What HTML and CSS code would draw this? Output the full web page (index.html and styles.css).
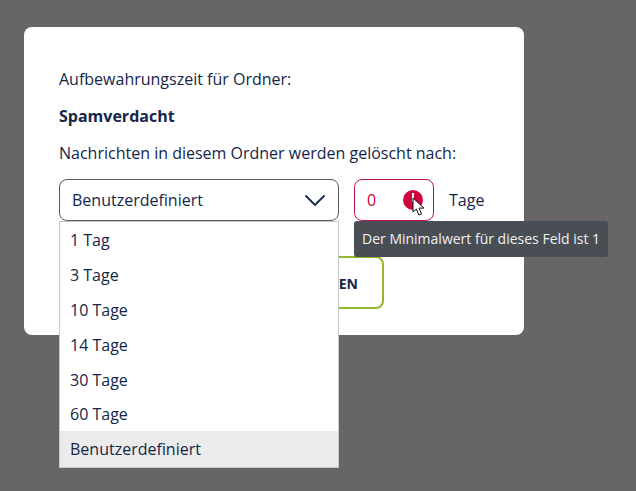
FILE: index.html
```html
<!DOCTYPE html>
<html lang="de">
<head>
<meta charset="utf-8">
<title>Aufbewahrungszeit</title>
<link rel="stylesheet" href="styles.css">
</head>
<body>
<div class="dialog">
  <p class="line first">Aufbewahrungszeit für Ordner:</p>
  <p class="line name">Spamverdacht</p>
  <p class="line">Nachrichten in diesem Ordner werden gelöscht nach:</p>
  <div class="controls">
    <div class="select-wrap">
      <div class="select">
        <span>Benutzerdefiniert</span>
        <svg class="chev" width="22" height="13" viewBox="0 0 22 13"><path d="M1.5 1.5 11 11l9.5-9.5" fill="none" stroke="#14264a" stroke-width="1.8"/></svg>
      </div>
      <ul class="menu">
        <li>1 Tag</li>
        <li>3 Tage</li>
        <li>10 Tage</li>
        <li>14 Tage</li>
        <li>30 Tage</li>
        <li>60 Tage</li>
        <li class="active">Benutzerdefiniert</li>
      </ul>
    </div>
    <div class="input-wrap">
      <div class="num">
        <span>0</span>
        <span class="err"><i class="bar"></i></span>
      </div>
      <div class="tip">Der Minimalwert für dieses Feld ist 1</div>
      <svg class="cursor" width="15" height="20" viewBox="0 0 15 20"><path d="M1 1v14l3.4-3 2.4 6 2.7-1.1-2.5-5.8H12z" fill="#fff" stroke="#111" stroke-width="1"/></svg>
    </div>
    <span class="unit">Tage</span>
  </div>
  <div class="actions">
    <button class="btn">ABBRECHEN</button>
  </div>
</div>
</body>
</html>
```
FILE: styles.css
```css
* { box-sizing: border-box; }
html, body { margin: 0; height: 100%; }
body {
  background: #666;
  font-family: "Open Sans", sans-serif;
  color: #14264a;
  font-size: 16px;
  padding: 27px 0 0 24px;
  overflow: hidden;
}
.dialog {
  width: 500px;
  height: 308px;
  background: #fff;
  border-radius: 8px;
  padding: 40px 35px 0;
}
.line { margin: 0 0 13px; line-height: 24px; height: 24px; }
.name { font-weight: 700; }
.controls { display: flex; align-items: flex-start; margin-top: 14px; }
.select-wrap { position: relative; width: 280px; }
.select {
  height: 42px;
  border: 1px solid #555b66;
  border-radius: 8px;
  display: flex;
  align-items: center;
  justify-content: space-between;
  padding: 0 3px 0 12px;
}
.chev { margin-right: 9px; }
.menu {
  position: absolute;
  left: 0;
  top: 42px;
  z-index: 2;
  width: 280px;
  margin: 0;
  padding: 0;
  list-style: none;
  background: #fff;
  border: 1px solid #c8c8c8;
}
.menu li { height: 34.9px; padding: 2px 0 0 10px; line-height: 32.9px; }
.menu .active { background: #ebebeb; height: 35.5px; }
.input-wrap { position: relative; width: 80px; margin-left: 15px; }
.num {
  height: 42px;
  border: 1px solid #b8114f;
  border-radius: 8px;
  color: #d0043c;
  display: flex;
  align-items: center;
  justify-content: space-between;
  padding: 0 10px 0 12px;
}
.err {
  width: 20px;
  height: 20px;
  border-radius: 50%;
  background: #d0043c;
  display: flex;
  justify-content: center;
  padding-top: 3px;
}
.bar { width: 2px; height: 9px; background: #fff; display: block; }
.tip {
  position: absolute;
  left: 0;
  top: 42px;
  z-index: 3;
  width: 254px;
  height: 36px;
  background: #494e55;
  color: #f0f0f0;
  border-radius: 3px;
  font-size: 14px;
  line-height: 36px;
  padding-left: 8px;
  white-space: nowrap;
}
.cursor { position: absolute; left: 58px; top: 18px; z-index: 4; }
.unit { margin-left: 15px; line-height: 42px; }
.actions { display: flex; margin-top: 35px; padding-left: 129px; }
.btn {
  width: 196px;
  height: 53px;
  background: #fff;
  border: 2px solid #93b928;
  border-radius: 8px;
  padding: 1px 24px 0 25px;
  text-align: right;
  font: 700 14px "Open Sans", sans-serif;
  color: #14264a;
}
```
